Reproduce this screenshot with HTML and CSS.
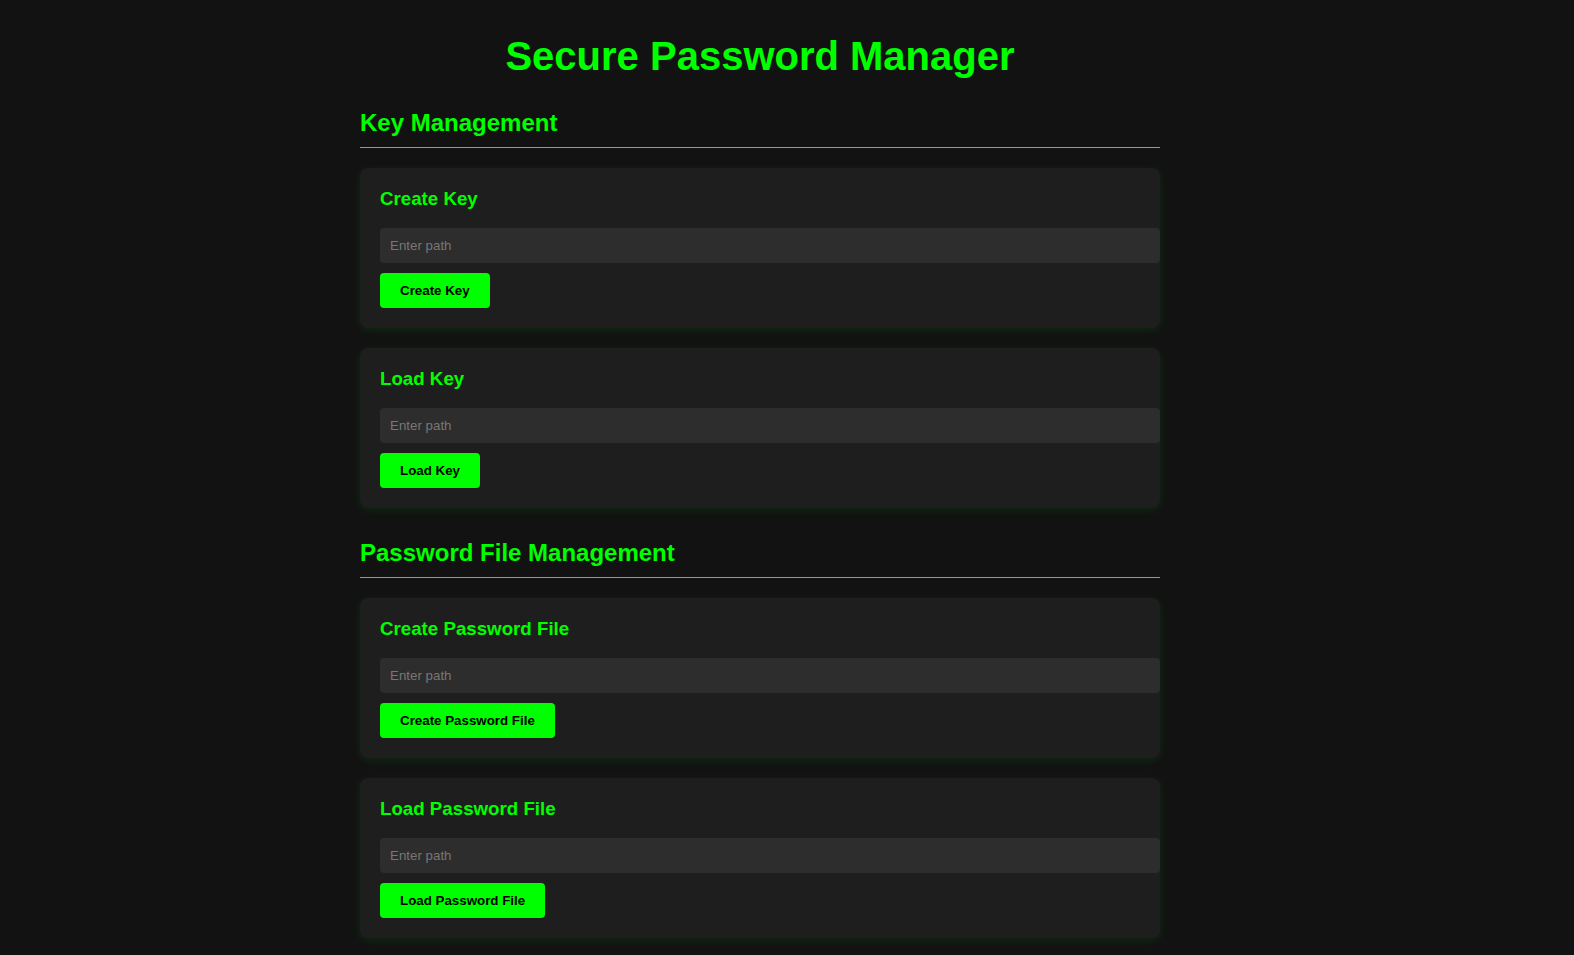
FILE: index.html
```html
<!DOCTYPE html>
<html lang="en">
<head>
<meta charset="utf-8">
<title>Secure Password Manager</title>
<link rel="stylesheet" href="styles.css">
</head>
<body>
<div class="container">
  <h1 class="title">Secure Password Manager</h1>

  <section class="section">
    <h2 class="section-title">Key Management</h2>
    <div class="card">
      <h3 class="card-title">Create Key</h3>
      <input class="path-input" type="text" placeholder="Enter path">
      <button class="action-btn">Create Key</button>
    </div>
    <div class="card">
      <h3 class="card-title">Load Key</h3>
      <input class="path-input" type="text" placeholder="Enter path">
      <button class="action-btn">Load Key</button>
    </div>
  </section>

  <section class="section">
    <h2 class="section-title">Password File Management</h2>
    <div class="card">
      <h3 class="card-title">Create Password File</h3>
      <input class="path-input" type="text" placeholder="Enter path">
      <button class="action-btn">Create Password File</button>
    </div>
    <div class="card">
      <h3 class="card-title">Load Password File</h3>
      <input class="path-input" type="text" placeholder="Enter path">
      <button class="action-btn">Load Password File</button>
    </div>
  </section>
</div>
</body>
</html>
```

FILE: styles.css
```css
html, body {
  margin: 0;
  padding: 0;
  background: #121212;
}

body {
  font-family: "Liberation Sans", Arial, sans-serif;
  color: #00ff00;
}

.container {
  width: 800px;
  margin-left: calc(50% - 427px);
  padding-top: 34px;
  padding-bottom: 40px;
}

.title {
  margin: 0 0 30px;
  font-size: 40px;
  font-weight: bold;
  line-height: normal;
  text-align: center;
  color: #00ff00;
}

.section {
  display: flex;
  flex-direction: column;
  gap: 20px;
}

.section + .section {
  margin-top: 31px;
}

.section-title {
  margin: 0;
  font-size: 24px;
  font-weight: bold;
  line-height: normal;
  padding-bottom: 10px;
  border-bottom: 1px solid #00ff00;
  color: #00ff00;
}

.card {
  background: #1e1e1e;
  border-radius: 8px;
  padding: 20px;
  box-shadow: 0 2px 10px rgba(0, 255, 0, 0.1);
  display: flex;
  flex-direction: column;
  align-items: flex-start;
}

.card-title {
  margin: 0 0 18px;
  font-size: 18.72px;
  font-weight: bold;
  line-height: normal;
  color: #00ff00;
}

.path-input {
  width: 100%;
  box-sizing: content-box;
  padding: 10px;
  margin: 0 0 10px;
  border: none;
  border-radius: 4px;
  background: #2d2d2d;
  color: #ffffff;
  font-family: "Liberation Sans", Arial, sans-serif;
  font-size: 13.333px;
  line-height: 15px;
  height: 15px;
  outline: none;
}

.path-input::placeholder {
  color: #777777;
}

.action-btn {
  padding: 10px 20px;
  border: none;
  border-radius: 4px;
  background: #00ff00;
  color: #000000;
  font-family: "Liberation Sans", Arial, sans-serif;
  font-size: 13.333px;
  font-weight: bold;
  line-height: 15px;
  cursor: pointer;
}
```
